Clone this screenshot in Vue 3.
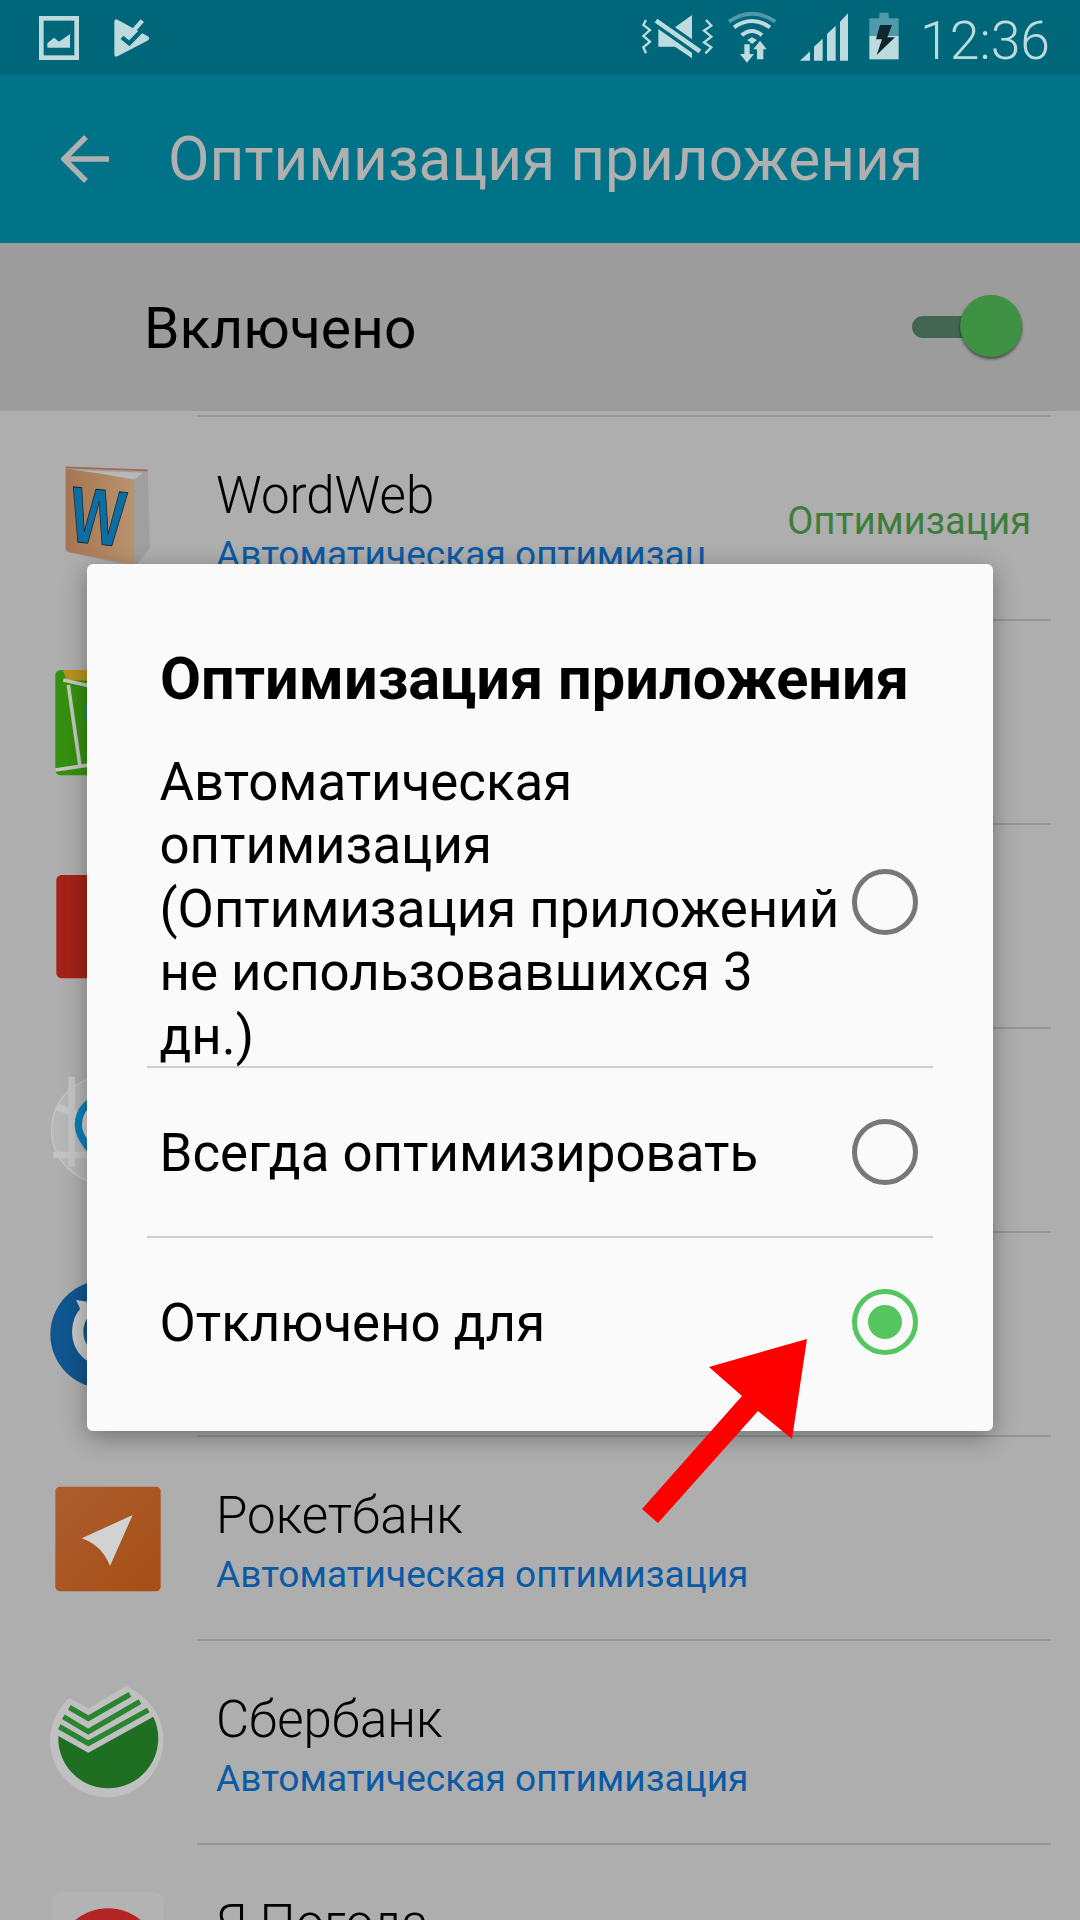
<script setup>
import { ref } from 'vue'

const enabled = ref(true)
const picked = ref(2)

const options = [
  'Автоматическая оптимизация (Оптимизация приложений не использовавшихся 3 дн.)',
  'Всегда оптимизировать',
  'Отключено для'
]

const auto = 'Автоматическая оптимизация'
const apps = [
  { id: 'wordweb', title: 'WordWeb', sub: auto, label: 'Оптимизация' },
  { id: 'map', title: '', sub: '' },
  { id: 'red', title: '', sub: '' },
  { id: 'pin', title: '', sub: '' },
  { id: 'clock', title: '', sub: '' },
  { id: 'rocket', title: 'Рокетбанк', sub: auto },
  { id: 'sber', title: 'Сбербанк', sub: auto },
  { id: 'pogoda', title: 'Я Погода', sub: auto }
]
</script>

<template>
  <div class="page">
    <div class="statusbar">
      <div class="status-left">
        <svg width="130" height="60" viewBox="0 0 390 180">
          <rect x="34" y="25" width="106" height="118" fill="none" stroke="#bddadf" stroke-width="14" />
          <path d="M52 113V100L72 83L87 95L120 72V113Z" fill="#bddadf" />
          <path d="M253 36Q253 24 264 30L352 78Q364 85 352 92L264 138Q253 144 253 132Z" fill="#bddadf" />
          <path d="M276 82L298 100L346 50" fill="none" stroke="#00677a" stroke-width="13" />
          <path d="M305 68L337 32" fill="none" stroke="#bddadf" stroke-width="13" />
        </svg>
      </div>
      <div class="status-right">
        <svg width="300" height="60" viewBox="0 0 900 180">
          <path d="M48 30L40 45L60 60L40 78L60 95L40 112L48 130M228 30L244 47L222 62L244 80L222 97L244 112L226 130" fill="none" stroke="#bddadf" stroke-width="7" />
          <path d="M186 15V88L135 52ZM85 57V110H135L186 145V128Z" fill="#bddadf" />
          <path d="M78 32L210 124" stroke="#bddadf" stroke-width="14" />
          <path d="M297 35Q366 -12 436 35" fill="none" stroke="#4f9aa8" stroke-width="12" />
          <path d="M312 52Q366 14 420 52" fill="none" stroke="#bddadf" stroke-width="12" />
          <path d="M335 76Q366 50 396 76" fill="none" stroke="#bddadf" stroke-width="12" />
          <path d="M352 90L366 82L381 90L366 102Z" fill="#bddadf" />
          <path d="M343 103H359V132H372L351 158L330 132H343Z" fill="#bddadf" />
          <path d="M381 148V118H370L390 92L410 118H400V148Z" fill="#bddadf" />
          <path d="M510 152L540 124V152ZM552 152V110L578 86V152ZM591 152V72L617 47V152ZM630 152V35L654 10V152Z" fill="#bddadf" />
          <path d="M748 8H776V25H806V78H718V25H748Z" fill="#4f9aa8" />
          <path d="M718 78H806V148H718Z" fill="#bddadf" />
          <path d="M750 45H786L772 82H795L740 135L756 88H738Z" fill="#10262e" />
        </svg>
        <span class="time">12:36</span>
      </div>
    </div>

    <header class="appbar">
      <svg class="back" width="48" height="50" viewBox="0 0 48 50">
        <path d="M48 25H4M25 3L3 25L25 47" fill="none" stroke="#b0b0b0" stroke-width="5.5" />
      </svg>
      <h1 class="appbar-title">Оптимизация приложения</h1>
    </header>

    <div class="switch-row">
      <span class="switch-label">Включено</span>
      <div class="switch" :class="{ on: enabled }">
        <div class="switch-thumb"></div>
      </div>
    </div>

    <ul class="app-list">
      <li v-for="app in apps" :key="app.id" class="app">
        <svg v-if="app.id === 'wordweb'" class="app-icon" viewBox="120 84 420 420">
          <defs>
            <linearGradient id="book-bg" x1="0" y1="0" x2="1" y2="0">
              <stop offset="0" stop-color="#a67450" />
              <stop offset="1" stop-color="#b9946f" />
            </linearGradient>
          </defs>
          <path d="M197 140L443 150L450 385L405 440L197 395Z" fill="#9f9f9f" />
          <path d="M205 150L430 158L403 178Z" fill="#b8b8b8" />
          <path d="M197 146Q300 158 403 180V435L204 396Q197 392 197 385Z" fill="url(#book-bg)" />
          <path d="M197 142L443 151" fill="none" stroke="#a5694f" stroke-width="5" />
          <text class="wordweb-w" text-anchor="middle" transform="translate(285 372) rotate(6) scale(.7 .95)">W</text>
        </svg>
        <svg v-else-if="app.id === 'map'" class="app-icon" viewBox="120 696 420 420">
          <rect x="166" y="750" width="316" height="316" rx="16" fill="#369010" />
          <path d="M188 750H480V790L200 780Z" fill="#b9931f" />
          <path d="M190 780L300 805M205 795L240 1040M166 1050L300 1030" fill="none" stroke="#c4c8bc" stroke-width="11" />
          <circle cx="320" cy="880" r="65" fill="#1f7fb0" />
        </svg>
        <svg v-else-if="app.id === 'red'" class="app-icon" viewBox="120 1308 420 420">
          <rect x="169" y="1365" width="312" height="310" rx="16" fill="#a32219" />
        </svg>
        <svg v-else-if="app.id === 'pin'" class="app-icon" viewBox="120 180 420 420">
          <circle cx="315" cy="390" r="160" fill="#b7b7b7" stroke="#c6c6c6" stroke-width="4" />
          <path d="M215 230V500M160 465H420M170 320L300 370" fill="none" stroke="#c4c4c4" stroke-width="20" />
          <path d="M320 290C270 290 235 330 235 375C235 420 290 470 320 500V290Z" fill="#d0d0d0" stroke="#0b7fb5" stroke-width="22" />
        </svg>
        <svg v-else-if="app.id === 'clock'" class="app-icon" viewBox="120 792 420 420">
          <circle cx="313" cy="1003" r="162" fill="#10568f" />
          <circle cx="325" cy="995" r="92" fill="#10568f" stroke="#c8c8c8" stroke-width="34" />
          <path d="M228 900L262 905L246 938Z" fill="#c8c8c8" />
        </svg>
        <svg v-else-if="app.id === 'rocket'" class="app-icon" viewBox="120 24 420 420">
          <defs>
            <linearGradient id="rocket-bg" x1="0" y1="0" x2="1" y2="1">
              <stop offset="0" stop-color="#ab5f2f" />
              <stop offset="1" stop-color="#a84d15" />
            </linearGradient>
          </defs>
          <rect x="166" y="80" width="316" height="314" rx="14" fill="url(#rocket-bg)" />
          <path d="M398 165L245 235Q305 255 330 318Z" fill="#d2d2d2" />
        </svg>
        <svg v-else-if="app.id === 'sber'" class="app-icon" viewBox="120 636 420 420">
          <path d="M380 678L265 745L208 714A170 170 0 1 0 430 712Q410 695 380 678Z" fill="#c0c0c0" />
          <path d="M175 828L265 878L460 770A150 150 0 1 1 175 828Z" fill="#1f6f22" />
          <path d="M208 742L265 775L390 703M190 770L265 815L420 725M178 800L265 850L445 750" fill="none" stroke="#2a8530" stroke-width="16" />
        </svg>
        <svg v-else class="app-icon" viewBox="120 1248 420 420">
          <rect x="158" y="1296" width="332" height="332" rx="28" fill="#b3b3b3" />
          <circle cx="324" cy="1500" r="155" fill="#b42424" />
        </svg>

        <div class="app-text">
          <div class="app-title">{{ app.title }}</div>
          <div class="app-sub">{{ app.sub }}</div>
        </div>
        <span v-if="app.label" class="app-label">{{ app.label }}</span>
      </li>
    </ul>

    <div class="overlay">
      <div class="dialog">
        <h2 class="dialog-title">Оптимизация приложения</h2>
        <div
          v-for="(text, i) in options"
          :key="i"
          class="option"
          :class="{ first: i === 0, last: i === options.length - 1 }"
        >
          <span class="option-text">{{ text }}</span>
          <span class="radio" :class="{ checked: picked === i }"></span>
        </div>
      </div>
    </div>

    <svg class="arrow" width="1080" height="1920" viewBox="0 0 1080 1920">
      <path d="M642 1509L742 1396L709 1367L807 1339L792 1439L758 1411L658 1523Z" fill="#ff0000" />
    </svg>
  </div>
</template>

<style scoped>
* {
  margin: 0;
  padding: 0;
  box-sizing: border-box;
}
.page {
  position: relative;
  width: 1080px;
  height: 1920px;
  overflow: hidden;
  background: #aeaeae;
  font-family: Roboto, sans-serif;
  color: #000;
}
.statusbar {
  display: flex;
  justify-content: space-between;
  align-items: flex-start;
  height: 75px;
  padding: 10px 30px 0 30px;
  background: #00677a;
}
.status-left,
.status-right {
  display: flex;
}
.status-right svg {
  margin-right: -10px;
}
.time {
  margin-top: 1px;
  font-size: 53.5px;
  line-height: 60px;
  font-weight: 300;
  color: #bddadf;
}
.appbar {
  display: flex;
  align-items: center;
  height: 168px;
  background: #007389;
}
.back {
  margin-left: 61px;
  margin-right: 59px;
}
.appbar-title {
  font-size: 60.4px;
  line-height: 70px;
  margin-top: 2px;
  font-weight: 400;
  color: #b0b0b0;
}
.switch-row {
  display: flex;
  align-items: center;
  justify-content: space-between;
  height: 168px;
  padding: 0 58px 0 144px;
  background: #9c9c9c;
}
.switch-label {
  font-size: 57px;
  line-height: 70px;
  margin-top: 4px;
}
.switch {
  position: relative;
  width: 110px;
  height: 22px;
  border-radius: 11px;
  background: #416550;
}
.switch-thumb {
  position: absolute;
  right: 0;
  top: -21px;
  width: 62px;
  height: 62px;
  border-radius: 50%;
  background: #3f9143;
  box-shadow: 0 2px 3px rgba(0, 0, 0, 0.55);
}
.app-list {
  list-style: none;
  padding-top: 4px;
}
.app {
  position: relative;
  display: flex;
  height: 204px;
  border-top: 2px solid #969696;
  border-image: linear-gradient(to right, transparent 198px, #969696 198px, #969696 1050px, transparent 1050px) 1;
}
.app-icon {
  flex: none;
  width: 140px;
  height: 140px;
  margin-top: 31px;
  margin-left: 40px;
}
.app-text {
  flex: 1;
  min-width: 0;
  margin-left: 36px;
  padding-top: 47px;
  white-space: nowrap;
  overflow: hidden;
}
.app-title {
  height: 64px;
  font-size: 51px;
  line-height: 64px;
  font-weight: 300;
}
.app-sub {
  font-size: 37.1px;
  line-height: 54px;
  color: #0b5aa5;
}
.app-label {
  flex: none;
  margin: 84px 49px 0 81px;
  font-size: 38px;
  line-height: 40px;
  color: #3f7d3a;
}
.overlay {
  position: absolute;
  inset: 75px 0 0 0;
  display: flex;
  align-items: center;
  justify-content: center;
}
.dialog {
  width: 906px;
  padding: 83px 60px 25.5px;
  border-radius: 6px;
  background: #fafafa;
  box-shadow: 0 6px 24px rgba(0, 0, 0, 0.35);
}
.dialog-title {
  height: 64px;
  margin-bottom: 37px;
  padding-left: 13px;
  font-size: 59.5px;
  line-height: 64px;
  font-weight: 700;
}
.option {
  display: flex;
  align-items: center;
  justify-content: space-between;
  min-height: 170px;
  padding: 0 15px 0 12.5px;
  border-bottom: 2px solid #cfcfcf;
}
.option.first .radio {
  margin-bottom: 9px;
}
.option.last {
  border-bottom: none;
  min-height: 168px;
}
.option-text {
  width: 690px;
  padding-top: 2.5px;
  margin-bottom: -2.5px;
  font-size: 52.8px;
  line-height: 63.5px;
}
.radio {
  position: relative;
  flex: none;
  width: 66px;
  height: 66px;
  border: 5px solid #777;
  border-radius: 50%;
}
.radio.checked {
  border-color: #55c55f;
}
.radio.checked::after {
  content: '';
  position: absolute;
  left: 11px;
  top: 11px;
  width: 34px;
  height: 34px;
  border-radius: 50%;
  background: #55c55f;
}
.arrow {
  position: absolute;
  left: 0;
  top: 0;
  pointer-events: none;
}
.wordweb-w {
  font-family: 'Liberation Sans', sans-serif;
  font-size: 250px;
  font-weight: 700;
  fill: #0e6da3;
  stroke: #123;
  stroke-width: 3px;
}
</style>
